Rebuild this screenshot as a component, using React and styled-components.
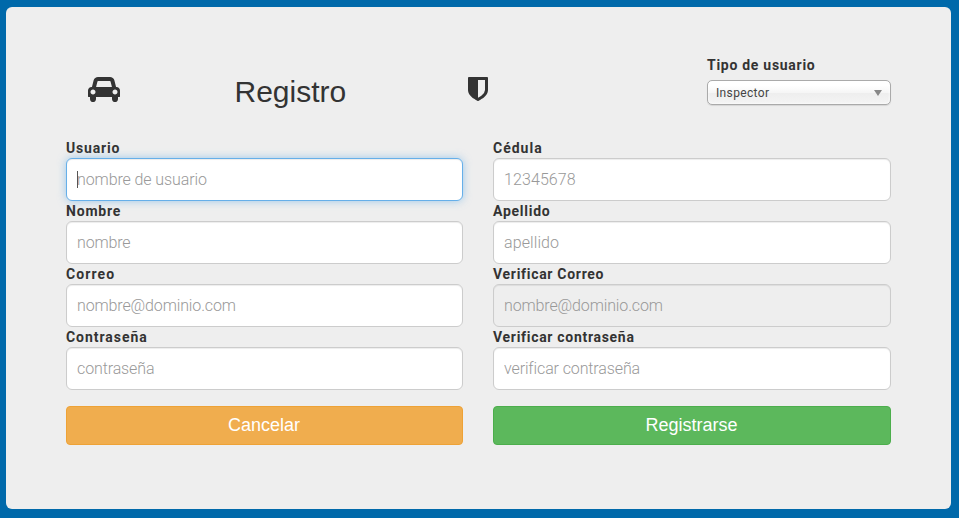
import React from "react";
import styled, { createGlobalStyle, css } from "styled-components";

const Global = createGlobalStyle`
  *, *::before, *::after { box-sizing: border-box; }
  body { margin: 0; background: #0069aa; color: #333; font-family: Roboto, "Liberation Sans", sans-serif; }
`;

const Page = styled.div`
  height: 518px;
  padding: 7px 8px 9px 6px;
  overflow: hidden;
`;

const Card = styled.form`
  height: 502px;
  padding: 46px 60px 0;
  border-radius: 6px;
  background: #eee;
`;

const Header = styled.header`
  display: grid;
  grid-template-columns: 168.5px 233.5px 239px 184px;
  height: 85px;
`;

const IconCell = styled.div`
  padding: 24px 0 0 ${(p) => p.$indent}px;
  svg { display: block; fill: #333; }
`;

const Title = styled.h1`
  margin: 22px 0 0;
  font: 400 30px/33px "Liberation Sans", Arial, sans-serif;
`;

const Label = styled.label`
  display: block;
  height: 20px;
  font-size: 14px;
  font-weight: 700;
  line-height: 20px;
  letter-spacing: ${(p) => p.$spacing}px;
  white-space: nowrap;
`;

const UserType = styled.div`
  padding-top: 2px;
`;

const Select = styled.button`
  display: flex;
  align-items: center;
  justify-content: space-between;
  width: 184px;
  height: 25px;
  margin-top: 5px;
  padding: 1px 8px 0 8px;
  border: 1px solid #aaa;
  border-radius: 5px;
  background: linear-gradient(#fff 20%, #f6f6f6 50%, #eee 52%, #f4f4f4 100%) padding-box;
  box-shadow: 0 0 3px #fff inset, 0 1px 1px rgba(0, 0, 0, 0.1);
  color: #444;
  font: 400 12px/22px Roboto, sans-serif;
  letter-spacing: 0.35px;
  svg { fill: #888; margin-bottom: 1px; }
`;

const Columns = styled.div`
  display: grid;
  grid-template-columns: 397px 398px;
  column-gap: 30px;
`;

const InputWrap = styled.div`
  position: relative;
  height: 43px;
`;

const Input = styled.input`
  display: block;
  width: 100%;
  height: 43px;
  padding: 0 10px;
  border: 1px solid #ccc;
  border-radius: 6px;
  outline: 0;
  background: ${(p) => (p.disabled ? "#eee" : "#fff")};
  box-shadow: inset 0 1px 1px rgba(0, 0, 0, 0.075);
  font: 300 16px Roboto, sans-serif;
  letter-spacing: ${(p) => p.$spacing}px;
  &::placeholder { color: #999; opacity: 1; }
  ${(p) => p.$active && css`
    border-color: #66afe9;
    box-shadow: inset 0 1px 1px rgba(0, 0, 0, 0.075), 0 0 8px rgba(102, 175, 233, 0.6);
  `}
`;

const Caret = styled.span`
  position: absolute;
  left: 11px;
  top: 13px;
  width: 1px;
  height: 17px;
  background: #555;
`;

const Button = styled.button`
  height: 39px;
  margin-top: 16px;
  padding: 0 1px 1px 0;
  border: 1px solid ${(p) => p.$edge};
  border-radius: 4px;
  background: ${(p) => p.$fill};
  color: #fff;
  font: 400 18px/24px "Liberation Sans", Arial, sans-serif;
`;

const CarIcon = () => (
  <svg width="32" height="25" viewBox="0 -32 2048 1600">
    <path d="M480 928q0-66-47-113t-113-47-113 47-47 113 47 113 113 47 113-47 47-113zm36-320h1016l-89-357q-2-8-14-17.500t-21-9.500h-768q-9 0-21 9.500t-14 17.500zm1372 320q0-66-47-113t-113-47-113 47-47 113 47 113 113 47 113-47 47-113zm160-96v384q0 14-9 23t-23 9h-96v128q0 80-56 136t-136 56-136-56-56-136v-128h-1024v128q0 80-56 136t-136 56-136-56-56-136v-128h-96q-14 0-23-9t-9-23v-384q0-93 65.500-158.500t158.500-65.500h28l105-419q23-94 104-157.500t179-63.500h768q98 0 179 63.500t104 157.500l105 419h28q93 0 158.500 65.500t65.500 158.500z" />
  </svg>
);

const ShieldIcon = () => (
  <svg width="20" height="24" viewBox="0 0 1280 1536">
    <path d="M1088 832v-640h-448v1137q119-63 213-137 235-184 235-360zm192-768v768q0 86-33.500 170.500t-83 150-118 127.500-126.500 103-121 77.500-89.500 49.500-42.500 20q-12 6-26 6t-26-6q-16-7-42.500-20t-89.500-49.500-121-77.500-126.500-103-118-127.500-83-150-33.500-170.500v-768q0-26 19-45t45-19h1152q26 0 45 19t19 45z" />
  </svg>
);

const fields = [
  { label: "Usuario", hint: "nombre de usuario", active: true, labelSpacing: 0.8, spacing: -0.1 },
  { label: "Cédula", hint: "12345678", labelSpacing: 1, spacing: 0.1 },
  { label: "Nombre", hint: "nombre", labelSpacing: 0.8, spacing: -0.15 },
  { label: "Apellido", hint: "apellido", labelSpacing: 0.75, spacing: 0.1 },
  { label: "Correo", hint: "nombre@dominio.com", labelSpacing: 1.1, spacing: -0.13 },
  { label: "Verificar Correo", hint: "nombre@dominio.com", disabled: true, labelSpacing: 0.7, spacing: -0.13 },
  { label: "Contraseña", hint: "contraseña", labelSpacing: 0.95, spacing: -0.12 },
  { label: "Verificar contraseña", hint: "verificar contraseña", labelSpacing: 0.7, spacing: -0.12 },
];

const Field = ({ label, hint, active, disabled, labelSpacing, spacing }) => (
  <div>
    <Label $spacing={labelSpacing}>{label}</Label>
    <InputWrap>
      <Input placeholder={hint} disabled={disabled} $active={active} $spacing={spacing} />
      {active && <Caret />}
    </InputWrap>
  </div>
);

export default function App() {
  return (
    <>
      <Global />
      <Page>
        <Card>
          <Header>
            <IconCell $indent={22}><CarIcon /></IconCell>
            <Title>Registro</Title>
            <IconCell $indent={0}><ShieldIcon /></IconCell>
            <UserType>
              <Label $spacing={0.72}>Tipo de usuario</Label>
              <Select type="button">
                Inspector
                <svg width="8" height="6" viewBox="0 0 8 6"><path d="M0 0h8L4 6z" /></svg>
              </Select>
            </UserType>
          </Header>
          <Columns>
            {fields.map((f) => <Field key={f.label} {...f} />)}
            <Button type="button" $fill="#f0ad4e" $edge="#eea236">Cancelar</Button>
            <Button type="button" $fill="#5cb85c" $edge="#4cae4c">Registrarse</Button>
          </Columns>
        </Card>
      </Page>
    </>
  );
}
